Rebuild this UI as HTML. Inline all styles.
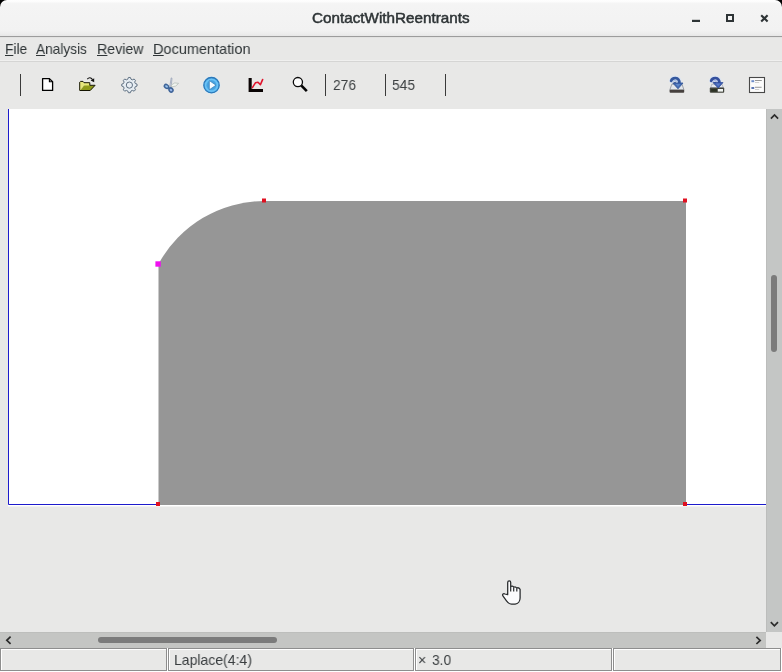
<!DOCTYPE html>
<html><head><meta charset="utf-8"><title>ContactWithReentrants</title>
<style>
html,body{margin:0;padding:0;}
body{width:782px;height:672px;position:relative;overflow:hidden;background:#e8e8e7;font-family:"Liberation Sans",sans-serif;font-size:15px;color:#2e3436;}
.abs{position:absolute;}
#corner-l,#corner-r{position:absolute;top:0;width:8px;height:8px;background:#000;}
#corner-l{left:0;}#corner-r{right:0;}
#titlebar{position:absolute;left:0;top:0;width:782px;height:36px;background:linear-gradient(#fefefe 0,#fcfcfc 2px,#f5f5f5 3px,#f4f4f4 6px,#f2f2f2 30px,#eeeeee 33px,#e7e7e7 36px);border-bottom:1px solid #9c9c9c;border-radius:7px 7px 0 0;}
#title{-webkit-text-stroke:0.5px #2e3436;position:absolute;top:9px;left:312px;font-weight:normal;font-size:15px;line-height:18px;white-space:nowrap;color:#2e3436;transform:scaleX(1.016);transform-origin:0 0;will-change:transform;}
#menubar{position:absolute;left:0;top:37px;width:782px;height:23px;background:linear-gradient(#dfdfde 0,#e8e8e7 1.5px);border-bottom:1px solid #f0f0ef;box-shadow:0 1px 0 #d5d5d4;}
.mi{position:absolute;top:40px;font-size:15px;line-height:18px;white-space:nowrap;transform-origin:0 0;will-change:transform;}
.mi b{position:absolute;left:0;top:15px;height:1px;background:#2e3436;}
.sep{position:absolute;top:74px;width:1px;height:22px;background:#3a3a3a;}
.num{font-size:15px;transform:scaleX(0.92);transform-origin:0 0;position:absolute;top:76px;line-height:18px;color:#3c4042;will-change:transform;}
#canvas{position:absolute;left:8px;top:109px;width:758px;height:397px;background:#fff;border-bottom:1px solid #f3f3f2;}
#vscroll{position:absolute;left:766px;top:109px;width:16px;height:523px;background:#c4c6c5;box-shadow:inset 1px 0 0 #bcbdbc;}
#hscroll{position:absolute;left:0;top:632px;width:766px;height:16px;background:#c4c5c3;box-shadow:inset 0 1px 0 #bdbebc;}
.thumb{position:absolute;background:#7b7b7b;border-radius:3px;}
.sp{position:absolute;top:648px;height:24px;box-sizing:border-box;background:#e8e8e7;box-shadow:inset -1px -1px 0 #fff;}
.sp i{position:absolute;left:0;top:0;right:1px;bottom:1px;border:1px solid #8e8e8e;box-shadow:inset 1px 1px 0 #fff;}
.st{position:absolute;top:651px;font-size:15px;line-height:18px;white-space:nowrap;color:#3a3e40;transform-origin:0 0;will-change:transform;}
</style></head><body>
<div id="corner-l"></div><div id="corner-r"></div>
<div id="titlebar"></div>
<div id="title">ContactWithReentrants</div>
<div id="menubar"></div>
<div class="mi" style="left:5px;transform:scaleX(0.92)">File<b style="width:9.2px"></b></div>
<div class="mi" style="left:36px;transform:scaleX(0.911)">Analysis<b style="width:10px"></b></div>
<div class="mi" style="left:97px;transform:scaleX(0.946)">Review<b style="width:10.8px"></b></div>
<div class="mi" style="left:152.5px;transform:scaleX(0.967)">Documentation<b style="width:10.8px"></b></div>

<div class="sep" style="left:20px"></div>
<div class="sep" style="left:325px"></div>
<div class="sep" style="left:385px"></div>
<div class="sep" style="left:445px"></div>
<div class="num" style="left:333px">276</div>
<div class="num" style="left:392px">545</div>

<div id="canvas"></div>
<svg class="abs" style="left:0;top:0" width="782" height="672" viewBox="0 0 782 672">
 <path d="M158.5 505 L158.5 264 A120.7 120.7 0 0 1 264 201 L686 201 L686 505 Z" fill="#969696"/>
 <path d="M8.5 109 V504.5 H158 M686 504.5 H766" fill="none" stroke="#1d1bcc" stroke-width="1"/>
 <rect x="155.4" y="261.3" width="5.4" height="5.4" fill="#f010f0"/>
 <rect x="262" y="198.5" width="4" height="4" fill="#e01020"/>
 <rect x="683" y="198.5" width="4" height="4" fill="#e01020"/>
 <rect x="156" y="502" width="4" height="4" fill="#e01020"/>
 <rect x="683" y="502" width="4" height="4" fill="#e01020"/>
</svg>
<div id="vscroll"><div class="thumb" style="left:5px;top:166px;width:6px;height:77px"></div></div>
<div id="hscroll"><div class="thumb" style="left:98px;top:5px;width:179px;height:6px"></div></div>

<div class="sp" style="left:0;width:168px"><i></i></div>
<div class="sp" style="left:168px;width:247px"><i></i></div>
<div class="sp" style="left:415px;width:198px"><i></i></div>
<div class="sp" style="left:613px;width:169px"><i></i></div>
<div class="st" style="left:174px;transform:scaleX(0.934)">Laplace(4:4)</div>
<div class="st" style="left:418px;transform:scaleX(0.94)">×</div>
<div class="st" style="left:431.5px;transform:scaleX(0.92)">3.0</div>

<svg id="icons" class="abs" style="left:0;top:0" width="782" height="672" viewBox="0 0 782 672">
 <g id="winbtns">
  <rect x="692" y="19.8" width="8" height="2.2" fill="#2e3436"/>
  <rect x="727" y="15" width="6" height="6" fill="none" stroke="#2e3436" stroke-width="2"/>
  <path d="M761.2 15.2 L767.6 21.6 M767.6 15.2 L761.2 21.6" stroke="#2e3436" stroke-width="2.1" stroke-linecap="butt"/>
 </g>
 <!-- new document -->
 <g id="ic-new">
  <path d="M42.6 78.6 H49.4 L52.6 81.8 V90.4 H42.6 Z" fill="#fff" stroke="#000" stroke-width="1.3" stroke-linejoin="round"/>
  <path d="M49.4 78.6 V81.8 H52.6" fill="none" stroke="#000" stroke-width="1.1"/>
 </g>
 <!-- open folder -->
 <g id="ic-open">
  <path d="M87.3 79.2 Q89.8 76.2 92.6 79.6" fill="none" stroke="#111" stroke-width="1.1"/>
  <path d="M90.6 80.6 L94.2 78.2 L94.2 82.2 Z" fill="#111"/>
  <path d="M79.7 90.4 V82.2 L80.5 81.4 H83 L84 82.7 H89.8 V85.4 H84 L80.4 90.4 Z" fill="#e6e67c"/>
  <path d="M79.7 90.4 V82.2 L80.5 81.4 H83 L84 82.7 H89.8 V85.4" fill="none" stroke="#141400" stroke-width="1" stroke-linejoin="round"/>
  <path d="M84 85.4 H95 L90.2 90.5 H80.2 Z" fill="#8f9a1c"/>
  <path d="M85 85.6 H89.6" stroke="#b9c03c" stroke-width="0.8"/>
  <path d="M89.6 85.3 H95.1 L90.2 90.5 H79.7" fill="none" stroke="#141400" stroke-width="1" stroke-linejoin="round"/>
 </g>
 <!-- gear -->
 <g id="ic-gear">
  <path d="M128.43 77.46 L130.37 77.46 L131.01 79.22 L132.42 79.80 L134.12 79.02 L135.48 80.38 L134.70 82.08 L135.28 83.49 L137.04 84.13 L137.04 86.07 L135.28 86.71 L134.70 88.12 L135.48 89.82 L134.12 91.18 L132.42 90.40 L131.01 90.98 L130.37 92.74 L128.43 92.74 L127.79 90.98 L126.38 90.40 L124.68 91.18 L123.32 89.82 L124.10 88.12 L123.52 86.71 L121.76 86.07 L121.76 84.13 L123.52 83.49 L124.10 82.08 L123.32 80.38 L124.68 79.02 L126.38 79.80 L127.79 79.22 Z" fill="#e6edf3" stroke="#5f7082" stroke-width="1" stroke-linejoin="round"/>
  <circle cx="129.4" cy="85.1" r="3.1" fill="#e8eef4" stroke="#5f7082" stroke-width="1"/>
 </g>
 <!-- scissors -->
 <g id="ic-cut">
  <path d="M169.9 86 L171.2 77.9 L172 78.2 L171.2 86.6 Z" fill="#e4e8ee" stroke="#8c98b0" stroke-width="0.7"/>
  <path d="M171.3 85 Q174.6 81.6 178.6 83.4 Q176.4 86.8 171.7 87 Z" fill="#f2f5f0" stroke="#b4bbb8" stroke-width="0.8"/>
  <path d="M168.2 87.4 L169.6 88.6" stroke="#3f6498" stroke-width="1.8"/>
  <ellipse cx="166.5" cy="86.4" rx="2.3" ry="1.7" transform="rotate(35 166.5 86.4)" fill="#9cc6ee" stroke="#3f6498" stroke-width="1.5"/>
  <ellipse cx="171" cy="90" rx="2.2" ry="1.8" transform="rotate(50 171 90)" fill="#9ab8ec" stroke="#3f6498" stroke-width="1.5"/>
 </g>
 <!-- play -->
 <g id="ic-play">
  <circle cx="211.5" cy="85.2" r="8.9" fill="#dcecf6"/>
  <circle cx="211.5" cy="85.2" r="7.7" fill="#56b2ec" stroke="#2c78b8" stroke-width="1.3"/>
  <circle cx="211.5" cy="85.2" r="5.9" fill="none" stroke="#6cc4f6" stroke-width="1.2"/>
  <circle cx="211.5" cy="85.2" r="4.7" fill="#48a2e0"/>
  <path d="M209.3 80.6 L216 85.2 L209.3 89.8 Z" fill="#f6fbff" stroke="#2f7cb8" stroke-width="0.7" stroke-linejoin="round"/>
 </g>
 <!-- chart -->
 <g id="ic-chart">
  <path d="M248.6 78 H251.7 V89 H263 V92 H248.6 Z" fill="#0a0404"/>
  <path d="M252.4 87.6 L255.4 82.8 L258 82.2 L260.4 84.6 L262.6 79.6" fill="none" stroke="#e0142c" stroke-width="1.6" stroke-linejoin="round" stroke-linecap="round"/>
 </g>
 <!-- magnifier -->
 <g id="ic-zoom">
  <path d="M301.2 85.4 L306.8 91.2" stroke="#050505" stroke-width="2.6" stroke-linecap="butt"/>
  <circle cx="297.9" cy="82.1" r="4.6" fill="#fdfdfd" stroke="#0a0a0a" stroke-width="1.3"/>
 </g>
 <!-- save -->
 <g id="ic-save">
  <path d="M671.8 84.2 H682 L684 90 H669.8 Z" fill="#e2e6ec" stroke="#8a8f98" stroke-width="0.8"/>
  <rect x="669.6" y="89.8" width="14.6" height="3" rx="0.8" fill="#46403e"/>
  <path d="M671.2 80.8 Q672.0 77.6 675.6 77.8 Q679.6 78.2 679.8 83.2" fill="none" stroke="#dde6f2" stroke-width="4.4" stroke-linecap="round"/>
  <path d="M671.2 80.8 Q672.0 77.9 675.6 78.1 Q679.4 78.4 679.4 83.4" fill="none" stroke="#35589e" stroke-width="2.8" stroke-linecap="round"/>
  <path d="M672.6 82.2 Q673.4 80 675.6 80.4 Q677.2 80.8 677.4 83" fill="none" stroke="#a6bde4" stroke-width="1.1"/>
  <path d="M674.0 83 Q674.6 81.6 676.0 82.4" fill="none" stroke="#35589e" stroke-width="1"/>
  <path d="M672.8 83 H683 L678 88.8 Z" fill="#416ab2" stroke="#2f5296" stroke-width="0.8" stroke-linejoin="round"/>
  <path d="M675.6 84 H680.4 L678 86.8 Z" fill="#5e86c8"/>
 </g>
 <!-- save as -->
 <g id="ic-saveas">
  <path d="M711.8 84.2 H722 L723.4 88 H710.6 Z" fill="#e2e6ee" stroke="#9095a4" stroke-width="0.6"/>
  <rect x="709.8" y="87.6" width="14.4" height="5.2" rx="1" fill="#42443c"/>
  <rect x="711.2" y="89" width="5.6" height="2.6" fill="#2c3224"/>
  <rect x="717.8" y="89" width="5.2" height="2.6" fill="#f2f6f4"/>
  <path d="M711.2 80.8 Q712.0 77.6 715.6 77.8 Q719.6 78.2 719.8 83.2" fill="none" stroke="#dde6f2" stroke-width="4.4" stroke-linecap="round"/>
  <path d="M711.2 80.8 Q712.0 77.9 715.6 78.1 Q719.4 78.4 719.4 83.4" fill="none" stroke="#35509e" stroke-width="2.8" stroke-linecap="round"/>
  <path d="M712.6 82.2 Q713.4 80 715.6 80.4 Q717.2 80.8 717.4 83" fill="none" stroke="#a6b6e4" stroke-width="1.1"/>
  <path d="M714.0 83 Q714.6 81.6 716.0 82.4" fill="none" stroke="#35509e" stroke-width="1"/>
  <path d="M713 82.6 H723 L718.2 88 Z" fill="#4162b4" stroke="#2f4a98" stroke-width="0.8" stroke-linejoin="round"/>
  <path d="M715.8 83.6 H720.4 L718.2 86.2 Z" fill="#5e7eca"/>
 </g>
 <!-- properties -->
 <g id="ic-props">
  <rect x="749.5" y="77.5" width="15" height="15" fill="#fcfcfc" stroke="#484848" stroke-width="1.1"/>
  <rect x="751.4" y="80.2" width="2.8" height="2" fill="#6c8cc8"/>
  <rect x="751.4" y="87" width="2.8" height="2" fill="#5a76b4"/>
  <rect x="755" y="80" width="6.8" height="0.9" fill="#8a8a8a"/>
  <rect x="755" y="82.2" width="4.2" height="0.8" fill="#c4c4c4"/>
  <rect x="755" y="86.8" width="6.6" height="0.9" fill="#8a8a8a"/>
  <rect x="755" y="89" width="4.2" height="0.8" fill="#c4c4c4"/>
 </g>
 <!-- scrollbar chevrons -->
 <g fill="none" stroke="#2b2b2b" stroke-width="1.7" stroke-linecap="butt" stroke-linejoin="miter">
  <path d="M770.9 118.7 L774.5 115 L778.1 118.7"/>
  <path d="M770.8 622.2 L774.4 625.9 L778 622.2"/>
  <path d="M10.6 636.7 L6.8 640.3 L10.6 643.9"/>
  <path d="M756.4 636.8 L760.2 640.4 L756.4 644"/>
 </g>
 <!-- hand cursor -->
 <g id="cursor">
  <path d="M507.7 594.6 V582.4 a1.5 1.5 0 0 1 3 0 V586.6 c1 -0.8 2.4 -0.6 3 0.6 c1 -0.6 2.3 -0.3 3 0.8 c1.2 -0.5 2.6 0 3.4 1.4 V598 c0 3.2 -2 6 -5 6.2 h-3.6 c-2 0 -3.5 -1.4 -5 -3.4 L502.9 595.8 c-0.9 -1.3 0.6 -2.7 2 -1.8 Z" fill="#fbfbfc" stroke="#26292b" stroke-width="1.25" stroke-linejoin="round"/>
  <path d="M510.7 586.6 V591.6 M513.7 587.4 V591.6 M516.8 588.2 V591.6" fill="none" stroke="#26292b" stroke-width="1.2"/>
 </g>
</svg>
</body></html>
